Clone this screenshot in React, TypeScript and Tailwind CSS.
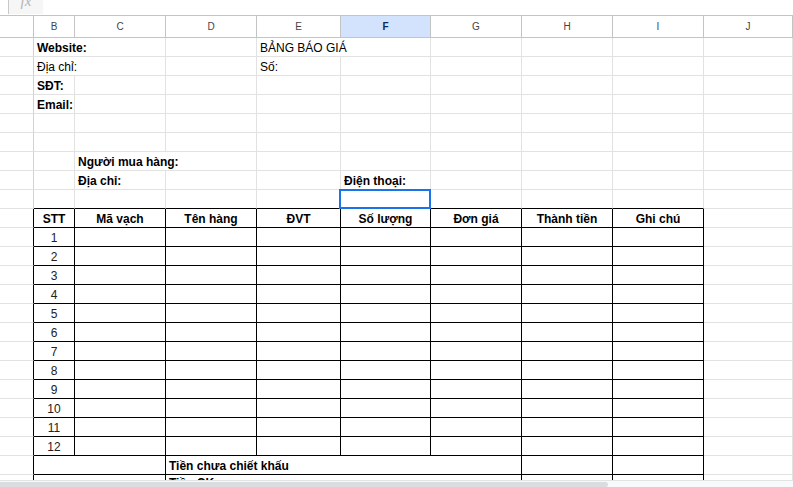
import React from "react";

type C = {
  w: string;
  t?: string;
  bold?: boolean;
  center?: boolean;
  r?: "k" | "g" | "h";
  b?: "k" | "g";
  sel?: boolean;
  top?: boolean;
};

const WCOL = [
  "w-[34px]",
  "w-[41px]",
  "w-[91px]",
  "w-[91px]",
  "w-[84px]",
  "w-[90px]",
  "w-[91px]",
  "w-[91px]",
  "w-[91px]",
  "flex-1",
];

function plainRow(over: Record<number, Partial<C>> = {}, bBlack = false): C[] {
  return WCOL.map((w, i) => ({
    w,
    r: i === 0 ? "h" : "g",
    b: bBlack && i >= 1 && i <= 8 ? "k" : "g",
    ...(over[i] || {}),
  }));
}

function tableRow(texts: string[], bold: boolean): C[] {
  return WCOL.map((w, i) => {
    if (i === 0) return { w, r: "k", b: "g" } as C;
    if (i === 9) return { w, r: "g", b: "g" } as C;
    return { w, r: "k", b: "k", t: texts[i - 1], bold, center: true } as C;
  });
}

function totalRow(label: string, top = false): C[] {
  return [
    { w: "w-[34px]", r: "k", b: "g" },
    { w: "w-[132px]", r: "k", b: "k" },
    { w: "w-[356px]", r: "k", b: "k", t: label, bold: true, top },
    { w: "w-[91px]", r: "k", b: "k" },
    { w: "w-[91px]", r: "k", b: "k" },
    { w: "flex-1", r: "g", b: "g" },
  ];
}

const rows: C[][] = [
  [
    { w: "w-[34px]", r: "h", b: "g" },
    { w: "w-[132px]", r: "g", b: "g", t: "Website:", bold: true },
    { w: "w-[91px]", r: "g", b: "g" },
    { w: "w-[174px]", r: "g", b: "g", t: "BẢNG BÁO GIÁ" },
    { w: "w-[91px]", r: "g", b: "g" },
    { w: "w-[91px]", r: "g", b: "g" },
    { w: "w-[91px]", r: "g", b: "g" },
    { w: "flex-1", r: "g", b: "g" },
  ],
  [
    { w: "w-[34px]", r: "h", b: "g" },
    { w: "w-[132px]", r: "g", b: "g", t: "Địa chỉ:" },
    { w: "w-[91px]", r: "g", b: "g" },
    { w: "w-[84px]", r: "g", b: "g", t: "Số:" },
    { w: "w-[90px]", r: "g", b: "g" },
    { w: "w-[91px]", r: "g", b: "g" },
    { w: "w-[91px]", r: "g", b: "g" },
    { w: "w-[91px]", r: "g", b: "g" },
    { w: "flex-1", r: "g", b: "g" },
  ],
  plainRow({ 1: { t: "SĐT:", bold: true } }),
  plainRow({ 1: { t: "Email:", bold: true } }),
  plainRow(),
  plainRow(),
  [
    { w: "w-[34px]", r: "h", b: "g" },
    { w: "w-[41px]", r: "g", b: "g" },
    { w: "w-[182px]", r: "g", b: "g", t: "Người mua hàng:", bold: true },
    { w: "w-[84px]", r: "g", b: "g" },
    { w: "w-[90px]", r: "g", b: "g" },
    { w: "w-[91px]", r: "g", b: "g" },
    { w: "w-[91px]", r: "g", b: "g" },
    { w: "w-[91px]", r: "g", b: "g" },
    { w: "flex-1", r: "g", b: "g" },
  ],
  plainRow({
    2: { t: "Địa chỉ:", bold: true },
    5: { t: "Điện thoại:", bold: true },
  }),
  plainRow({ 5: { sel: true } }, true),
  tableRow(
    ["STT", "Mã vạch", "Tên hàng", "ĐVT", "Số lượng", "Đơn giá", "Thành tiền", "Ghi chú"],
    true
  ),
  ...Array.from({ length: 12 }, (_, i) =>
    tableRow([String(i + 1), "", "", "", "", "", "", ""], false)
  ),
  totalRow("Tiền chưa chiết khấu"),
  totalRow("Tiền CK", true),
];

function Cell({ c }: { c: C }) {
  const rc =
    c.r === "k"
      ? "border-r-black"
      : c.r === "h"
      ? "border-r-[#d2d2d2]"
      : "border-r-[#e2e2e2]";
  const bc = c.b === "k" ? "border-b-black" : "border-b-[#e2e2e2]";
  return (
    <div
      className={`${c.w} ${c.w === "flex-1" ? "" : "shrink-0"} relative h-full flex ${
        c.top ? "items-start pt-[1px]" : "items-end pb-[1px]"
      } ${c.center ? "justify-center" : "justify-start"} border-r border-b ${rc} ${bc} px-[3px] whitespace-nowrap ${
        c.sel ? "overflow-visible" : "overflow-hidden"
      }`}
    >
      {c.t ? (
        <span
          className={`leading-[14px] text-[12px] ${
            c.bold ? "font-bold text-black" : c.center ? "text-[#222]" : "text-black"
          }`}
        >
          {c.t}
        </span>
      ) : null}
      {c.sel ? (
        <div className="absolute z-10 left-[-2px] top-[-1px] right-[-1px] bottom-[-1px] border-2 border-[#1a73e8]" />
      ) : null}
    </div>
  );
}

const headers = ["", "B", "C", "D", "E", "F", "G", "H", "I", "J"];

export default function App() {
  return (
    <div
      className="w-[793px] h-[487px] bg-white overflow-hidden flex flex-col"
      style={{ fontFamily: '"Liberation Sans", Arial, sans-serif' }}
    >
      <div className="h-[480px] overflow-hidden flex flex-col">
        {/* formula bar remnant */}
        <div className="h-[16px] shrink-0 flex border-b border-b-[#c4c4c4]">
          <div className="w-[8px]" />
          <div className="w-[35px] h-[14px] bg-[#f6f6f6] border-l border-l-[#c8c8c8] flex justify-center overflow-hidden">
            <span
              className="italic text-[15px] leading-[15px] text-[#b4b4b4] -mt-[6px]"
              style={{ fontFamily: '"Liberation Serif", serif' }}
            >
              fx
            </span>
          </div>
        </div>
        {/* column headers */}
        <div className="h-[22px] shrink-0 flex">
          {headers.map((h, i) => (
            <div
              key={i}
              className={`${WCOL[i]} ${i === 9 ? "" : "shrink-0"} h-full flex items-center justify-center border-r border-b border-r-[#c4c4c4] border-b-[#c4c4c4] text-[10px] ${
                i === 5 ? "bg-[#d3e3fd] text-[#0b2a5c] font-bold" : "bg-white text-[#444]"
              }`}
            >
              {h}
            </div>
          ))}
        </div>
        {rows.map((row, ri) => (
          <div key={ri} className="h-[19px] shrink-0 flex">
            {row.map((c, ci) => (
              <Cell key={ci} c={c} />
            ))}
          </div>
        ))}
      </div>
      {/* horizontal scrollbar */}
      <div className="h-[7px] shrink-0 bg-[#f8f9fa] border-t border-t-[#e3e3e3] flex">
        <div className="w-[608px] h-[5px] mt-[1px] bg-[#dadce0] rounded-r-[3px]" />
      </div>
    </div>
  );
}
